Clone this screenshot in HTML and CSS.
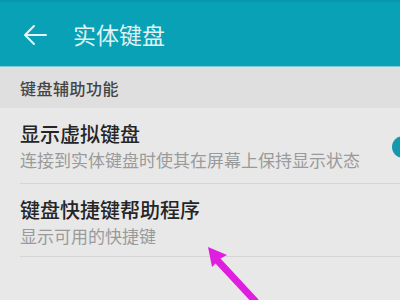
FILE: index.html
```html
<!DOCTYPE html>
<html lang="zh">
<head>
<meta charset="utf-8">
<link rel="stylesheet" href="styles.css">
</head>
<body>
<div class="screen">
  <header class="appbar">
    <svg class="back" width="24" height="22" viewBox="0 0 24 22">
      <path d="M23 11H2M11 2L2 11l9 9" fill="none" stroke="#e4f4f6" stroke-width="2" stroke-linecap="round" stroke-linejoin="round"/>
    </svg>
    <h1 class="title">实体键盘</h1>
  </header>
  <div class="section">键盘辅助功能</div>
  <div class="item item-first">
    <div class="texts">
      <div class="item-title">显示虚拟键盘</div>
      <div class="item-sub">连接到实体键盘时使其在屏幕上保持显示状态</div>
    </div>
    <div class="thumb"></div>
  </div>
  <div class="item">
    <div class="texts">
      <div class="item-title">键盘快捷键帮助程序</div>
      <div class="item-sub">显示可用的快捷键</div>
    </div>
  </div>
  <svg class="pointer" width="400" height="300" viewBox="0 0 400 300">
    <polygon points="208,247 227,255 220.5,258.6 258.5,299.6 253.5,304.4 215.5,263.4 212,267" fill="#e01ee0"/>
  </svg>
</div>
</body>
</html>
```
FILE: styles.css
```css
html, body {
  margin: 0;
  padding: 0;
}
body {
  width: 400px;
  height: 300px;
  overflow: hidden;
  background: #e8e8e8;
  font-family: "Noto Sans CJK SC", "Noto Sans", sans-serif;
}
.screen {
  position: relative;
  width: 400px;
  height: 300px;
  overflow: hidden;
}
.appbar {
  background: #09a1b5;
  border-top: 2px solid #0797ab;
  box-sizing: border-box;
  border-bottom: 1px solid #7fcbd5;
  height: 67px;
  display: flex;
  align-items: center;
  padding-left: 23px;
}
.back {
  display: block;
  margin-top: 2px;
}
.title {
  margin: 0 0 0 26px;
  font-size: 23px;
  font-weight: 400;
  color: #dff2f4;
  line-height: 30px;
}
.section {
  height: 41px;
  background: #dfdfdf;
  display: flex;
  align-items: center;
  padding-left: 20px;
  font-size: 16px;
  letter-spacing: 0.5px;
  font-weight: 500;
  color: #454545;
}
.item {
  margin-left: 20px;
  padding: 13px 0 8px;
  border-bottom: 1px solid #d5d5d5;
  display: flex;
  align-items: center;
}
.item-first {
  padding-bottom: 11px;
}
.texts {
  flex: 1;
}
.item-title {
  font-size: 20px;
  line-height: 26px;
  font-weight: 500;
  color: #252525;
}
.item-sub {
  font-size: 17px;
  line-height: 25px;
  color: #9a9a9a;
}
.thumb {
  width: 22px;
  height: 22px;
  border-radius: 50%;
  background: #1598ae;
  margin-right: -14px;
  flex: none;
}
.pointer {
  position: absolute;
  left: 0;
  top: 0;
  pointer-events: none;
}
```
